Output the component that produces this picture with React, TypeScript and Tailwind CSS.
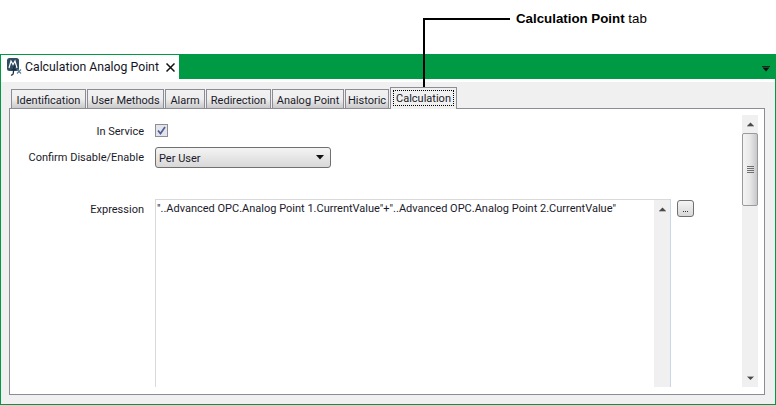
const font = { fontFamily: '"Roboto", "Open Sans", sans-serif' };

const tabs = [
  { label: "Identification", w: "w-[75px]" },
  { label: "User Methods", w: "w-[77px]" },
  { label: "Alarm", w: "w-[40px]" },
  { label: "Redirection", w: "w-[65px]" },
  { label: "Analog Point", w: "w-[72px]" },
  { label: "Historic", w: "w-[44px]" },
];

function Arrow({ up }: { up?: boolean }) {
  return (
    <svg width="7" height="5" viewBox="0 0 7 5" className="block">
      <path d={up ? "M3.5 0.5 L7 4 L0 4 Z" : "M0 0.5 L7 0.5 L3.5 4 Z"} fill="#4a4a4a" />
      <path d={up ? "M0 4.5 H7" : "M1 0 H6"} stroke="#bbbbbb" strokeWidth="1" />
    </svg>
  );
}

function PointIcon() {
  return (
    <svg width="15" height="18" viewBox="0 0 15 18" className="block shrink-0">
      <rect x="0" y="0" width="12" height="13" rx="2.5" fill="#2f4c63" />
      <path d="M2 10 L4 3 L6 6.5 L8 3 L10 10" fill="none" stroke="#ffffff" strokeWidth="1.2" />
      <path d="M8.5 8 C6.5 8 6.7 10 6.5 13 C6.4 16 6 17.5 4 17" fill="none" stroke="#1c2e3e" strokeWidth="1.3" />
      <path d="M4.5 11.5 H9" stroke="#1c2e3e" strokeWidth="1" />
      <path d="M10 11.5 L14 15.5 M14 11.5 L10 15.5" stroke="#5b7f9c" strokeWidth="1.2" />
    </svg>
  );
}

function Scrollbar({ thumb }: { thumb?: boolean }) {
  return (
    <div className="flex w-[16px] shrink-0 flex-col bg-[#f0f0f0]">
      <div className="flex h-[18px] shrink-0 items-center justify-center">
        <Arrow up />
      </div>
      {thumb ? (
        <div className="flex h-[73px] shrink-0 flex-col items-center justify-center gap-[1px] rounded-[2px] border border-[#9a9a9a] bg-gradient-to-r from-[#f4f4f4] via-[#e8e8e8] to-[#c8c8cc]">
          <div className="h-[1px] w-[7px] bg-[#6f6f6f]" />
          <div className="h-[1px] w-[7px] bg-[#6f6f6f]" />
          <div className="h-[1px] w-[7px] bg-[#6f6f6f]" />
          <div className="h-[1px] w-[7px] bg-[#6f6f6f]" />
        </div>
      ) : null}
      <div className="flex-1" />
      {thumb ? (
        <div className="flex h-[18px] shrink-0 items-center justify-center">
          <Arrow />
        </div>
      ) : null}
    </div>
  );
}

export default function App() {
  return (
    <div className="relative h-[405px] w-[776px] overflow-hidden bg-white text-[11px] text-[#1a1a2a]" style={font}>
      {/* Callout */}
      <div className="absolute left-[423px] top-[18px] h-[75px] w-[2px] bg-black" />
      <div className="absolute left-[423px] top-[18px] h-[2px] w-[87px] bg-black" />
      <div
        className="absolute left-[516px] top-[10px] text-[13.3px] leading-[17px] text-black"
        style={{ fontFamily: '"Liberation Sans", sans-serif' }}
      >
        <span className="font-bold">Calculation Point</span> tab
      </div>

      <div className="h-[54px]" />

      {/* Window */}
      <div className="flex h-[351px] flex-col border border-[#009a44] bg-white">
        <div className="flex h-[24px] shrink-0 items-stretch bg-[#009a44]">
          <div className="flex w-[178px] items-center bg-white pl-[6px] text-[12.25px] text-[#15151f]">
            <PointIcon />
            <span className="ml-[3px] whitespace-nowrap">Calculation Analog Point</span>
            <svg width="9" height="9" viewBox="0 0 9 9" className="ml-[7px] block shrink-0">
              <path d="M0.5 0.5 L8.5 8.5 M8.5 0.5 L0.5 8.5" stroke="#111111" strokeWidth="1.5" />
            </svg>
          </div>
          <div className="flex flex-1 items-center justify-end pr-[5px] pt-[4px]">
            <svg width="8" height="6" viewBox="0 0 8 6" className="block">
              <path d="M0 0.5 H8" stroke="#222222" strokeWidth="1" />
              <path d="M0.5 1.5 H7.5 L4 5.5 Z" fill="#111111" />
            </svg>
          </div>
        </div>

        <div className="mt-[3px] flex flex-1 flex-col bg-[#f0f0f0] pb-[9px] pl-[8px] pr-[10px]">
          {/* Tabs */}
          <div className="flex h-[26px] shrink-0 items-end pl-[2px]">
            {tabs.map((t) => (
              <div
                key={t.label}
                className={`${t.w} mr-[1px] flex h-[19px] shrink-0 items-center justify-center whitespace-nowrap border border-b-0 border-[#8c8c96] bg-gradient-to-b from-[#f2f2f2] via-[#eeeeee] to-[#c9c9c9] pt-[2px] leading-none last:mr-0`}
              >
                {t.label}
              </div>
            ))}
            <div className="relative z-10 -mb-[1px] flex h-[22px] w-[67px] shrink-0 items-start justify-center border border-b-0 border-[#8c8c96] bg-[#f0f0f0] pt-[2px]">
              <div className="flex h-[16px] w-[61px] items-center justify-center border border-dotted border-black leading-none">
                Calculation
              </div>
            </div>
          </div>

          {/* Panel */}
          <div className="flex min-h-0 flex-1 border border-[#8c8c96] bg-white pb-[7px] pr-[6px] pt-[6px]">
            <div className="flex min-w-0 flex-1 flex-col pt-[9px]">
              <div className="flex h-[13px] items-center">
                <div className="w-[134px] pt-[3px] text-right">In Service</div>
                <div className="ml-[11px] flex h-[13px] w-[13px] items-center justify-center border border-[#8e8f8f] bg-[#e4e4ea]">
                  <svg width="9" height="9" viewBox="0 0 9 9" className="block">
                    <path d="M1 4.5 L3.5 7.5 L8 1" fill="none" stroke="#4a5f97" strokeWidth="1.7" />
                  </svg>
                </div>
              </div>
              <div className="mt-[10px] flex h-[21px] items-center">
                <div className="w-[134px] pt-[2px] text-right">Confirm Disable/Enable</div>
                <div className="ml-[11px] flex h-[21px] w-[176px] items-center justify-between rounded-[3px] border border-[#707070] bg-gradient-to-b from-[#f4f4f4] to-[#d8d8d8] pl-[3px] pr-[6px]">
                  <span className="pt-[3px]">Per User</span>
                  <svg width="8" height="5" viewBox="0 0 8 5" className="block">
                    <path d="M0 0 H8 L4 4.5 Z" fill="#111111" />
                  </svg>
                </div>
              </div>
              <div className="mt-[31px] flex min-h-0 flex-1">
                <div className="w-[134px] pt-[3px] text-right">Expression</div>
                <div className="ml-[11px] flex w-[516px] shrink-0 overflow-hidden border-l border-r border-t border-l-[#d9d9d9] border-r-[#c9d6e4] border-t-[#d9d9d9] bg-white">
                  <div className="min-w-0 flex-1 whitespace-nowrap pl-[1px] pt-[1px]">
                    "..Advanced OPC.Analog Point 1.CurrentValue"+"..Advanced OPC.Analog Point 2.CurrentValue"
                  </div>
                  <Scrollbar />
                </div>
                <div className="ml-[6px] mt-[1px] flex h-[17px] w-[17px] items-end justify-center rounded-[3px] border border-[#707070] bg-gradient-to-b from-[#f4f4f4] to-[#d8d8d8] pb-[4px]">
                  <div className="flex gap-[1px]">
                    <div className="h-[1px] w-[1px] bg-[#333333]" />
                    <div className="h-[1px] w-[1px] bg-[#333333]" />
                    <div className="h-[1px] w-[1px] bg-[#333333]" />
                  </div>
                </div>
              </div>
            </div>
            <Scrollbar thumb />
          </div>
        </div>
      </div>
    </div>
  );
}
